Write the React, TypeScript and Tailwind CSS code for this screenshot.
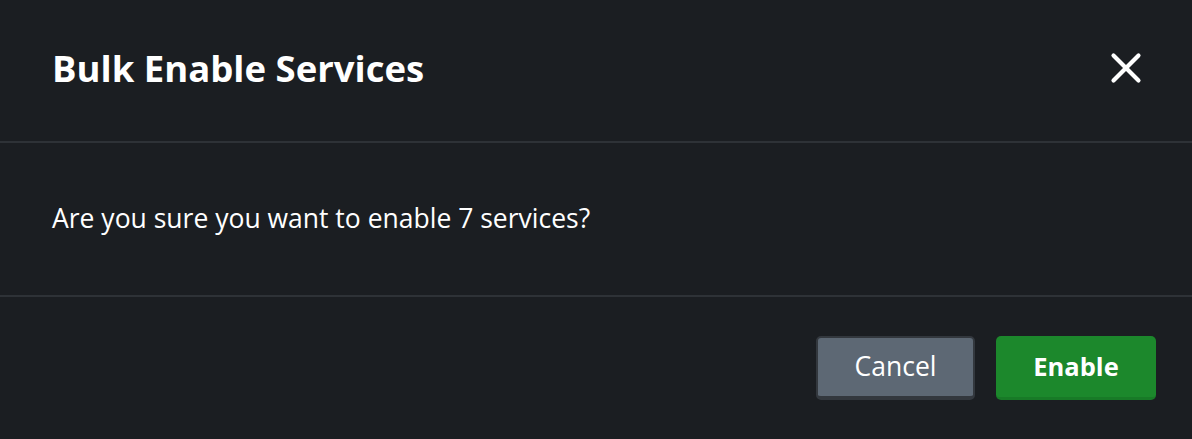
import { X } from "lucide-react";

export default function App() {
  return (
    <div
      className="w-[1192px] h-[439px] bg-[#1b1e22] text-white flex flex-col"
      style={{ fontFamily: "'Open Sans', 'Noto Sans', sans-serif" }}
    >
      {/* Header */}
      <div className="h-[141px] flex items-center justify-between pl-[52px] pr-[41px] pb-[5px]">
        <h2 className="text-[36.5px] font-bold leading-none">Bulk Enable Services</h2>
        <button className="w-[50px] h-[50px] flex items-center justify-center text-white">
          <X size={50} strokeWidth={2} />
        </button>
      </div>
      <div className="h-[2px] bg-[#2e3237]" />

      {/* Body */}
      <div className="h-[152px] flex items-center pl-[52px]">
        <p className="text-[26.5px] text-white">Are you sure you want to enable 7 services?</p>
      </div>
      <div className="h-[2px] bg-[#2e3237]" />

      {/* Footer */}
      <div className="flex-1 flex items-center justify-end gap-[21px] pr-[36px]">
        <button className="w-[159px] h-[64px] rounded-[5px] bg-[#5d6874] border-2 border-[#33383e] border-b-[4px] text-[26.5px] text-white">
          Cancel
        </button>
        <button className="w-[160px] h-[64px] rounded-[5px] bg-[#1c882c] border-b-[3px] border-[#187a27] text-[25.5px] font-bold text-white">
          Enable
        </button>
      </div>
    </div>
  );
}
